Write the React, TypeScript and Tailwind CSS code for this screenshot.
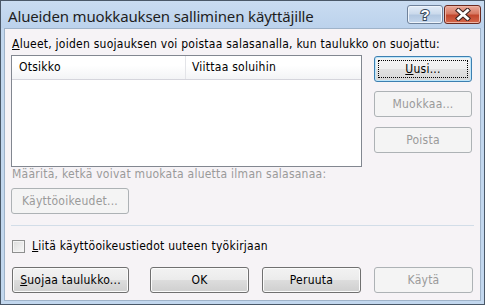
import React from "react";

const ui = "font-['DejaVu_Sans_Condensed','Liberation_Sans',sans-serif] text-[12px] leading-[13px] tracking-[0.25px]";

const btnBase =
  "flex items-center justify-center h-[26px] rounded-[3px] border " + ui;
const btnNormal =
  btnBase +
  " border-[#707070] text-black bg-[linear-gradient(#f2f2f2_0%,#ebebeb_50%,#dddddd_50%,#cfcfcf_100%)] shadow-[inset_0_0_0_1px_#fbfbfb]";
const btnDefault =
  btnBase +
  " border-[#3c7fb1] text-black bg-[linear-gradient(#f4f4f4_0%,#eeeeee_50%,#e2e2e2_50%,#d6d6d6_100%)] shadow-[inset_0_0_0_1px_#bfe6fa]";
const btnDisabled =
  btnBase + " border-[#adb2b5] text-[#9a9a9a] bg-[#f4f4f4]";

const HelpButton = () => (
  <div className="w-[36px] h-[19px] rounded-[3px] border border-[#6f829b] bg-[linear-gradient(#e3ecf7_0%,#cbdaec_45%,#b3c8e1_55%,#c3d6ec_100%)] shadow-[inset_0_0_0_1px_#eef4fb] flex items-center justify-center">
    <svg width="14" height="15" viewBox="0 0 14 15">
      <text
        x="7"
        y="13"
        textAnchor="middle"
        fontFamily="Liberation Sans, sans-serif"
        fontWeight="bold"
        fontSize="15"
        fill="#ffffff"
        stroke="#3a4a5e"
        strokeWidth="2"
        style={{ paintOrder: "stroke" }}
      >
        ?
      </text>
    </svg>
  </div>
);

const CloseButton = () => (
  <div className="w-[37px] h-[19px] rounded-[3px] border border-[#6b2a20] bg-[linear-gradient(#e9a99a_0%,#d77a63_45%,#c2472d_55%,#d4674b_100%)] shadow-[inset_0_0_0_1px_#eeb3a3] flex items-center justify-center">
    <svg width="16" height="13" viewBox="0 0 16 13">
      <path d="M3.5 2.5 L12.5 10.5 M12.5 2.5 L3.5 10.5" stroke="#3b2320" strokeWidth="5" strokeLinecap="square" />
      <path d="M3.5 2.5 L12.5 10.5 M12.5 2.5 L3.5 10.5" stroke="#ffffff" strokeWidth="3" strokeLinecap="square" />
    </svg>
  </div>
);

export default function App() {
  return (
    <div className="w-[485px] h-[305px] border border-[#4a5868] bg-[#c2d7ee] flex flex-col">
      {/* title bar */}
      <div className="h-[27px] flex items-start bg-[linear-gradient(#c9dcf1,#bcd2ec)]">
        <div className="flex-1 pl-[7px] pt-[5px] font-['Noto_Sans',sans-serif] text-[15px] leading-[20px] text-[#1e1e1e] tracking-[-0.15px]">
          Alueiden muokkauksen salliminen käyttäjille
        </div>
        <div className="flex gap-[1px] pt-[4px] pr-[3px]">
          <HelpButton />
          <CloseButton />
        </div>
      </div>

      <div className="flex-1 flex px-[3px] pb-[3px]">
        {/* client area */}
        <div className={"flex-1 border border-[#9fb3c9] bg-[#f6f3f6] flex flex-col text-black " + ui}>
          <div className="mt-[9px] ml-[7px] h-[13px]">
            <span className="underline">A</span>lueet, joiden suojauksen voi poistaa salasanalla, kun taulukko on suojattu:
          </div>

          <div className="mt-[4px] flex items-start">
            {/* list box */}
            <div className="ml-[6px] w-[351px] h-[112px] border border-[#828790] bg-white">
              <div className="h-[24px] flex border-b border-[#d5d5dc] bg-[linear-gradient(#ffffff_0%,#ffffff_40%,#f3f4f6_100%)]">
                <div className="w-[174px] border-r border-[#e3e4e8] pl-[7px] flex items-center">Otsikko</div>
                <div className="pl-[6px] flex items-center">Viittaa soluihin</div>
              </div>
            </div>

            {/* side buttons */}
            <div className="ml-[12px] mt-[1px] w-[98px] flex flex-col">
              <button className={btnDefault + " w-[98px] relative"}>
                <span className="absolute inset-[3px] border border-dotted border-black" />
                <span>
                  <span className="underline">U</span>usi...
                </span>
              </button>
              <button className={btnDisabled + " w-[98px] mt-[9px]"}>Muokkaa...</button>
              <button className={btnDisabled + " w-[98px] mt-[10px]"}>Poista</button>
            </div>
          </div>

          <div className="mt-[1px] ml-[7px] h-[13px] text-[#9a9a9a]">
            Määritä, ketkä voivat muokata aluetta ilman salasanaa:
          </div>

          <button className={btnDisabled + " ml-[6px] mt-[7px] w-[118px]"}>Käyttöoikeudet...</button>

          <div className="mt-[11px] ml-[6px] mr-[6px] h-px bg-[#d2dde8]" />

          <div className="mt-[14px] ml-[7px] flex items-center">
            <div className="w-[13px] h-[13px] border border-[#8e8f8f] bg-[linear-gradient(135deg,#dcdcdc,#f8f8f8)] shadow-[inset_0_0_0_1px_#f4f4f4]" />
            <span className="ml-[7px]">
              <span className="underline">L</span>iitä käyttöoikeustiedot uuteen työkirjaan
            </span>
          </div>

          <div className="mt-[14px] ml-[7px] flex">
            <button className={btnNormal + " w-[117px]"}>
              <span>
                <span className="underline">S</span>uojaa taulukko...
              </span>
            </button>
            <button className={btnNormal + " w-[99px] ml-[21px]"}>OK</button>
            <button className={btnNormal + " w-[99px] ml-[13px]"}>Peruuta</button>
            <button className={btnDisabled + " w-[99px] ml-[13px]"}>Käytä</button>
          </div>
        </div>
      </div>
    </div>
  );
}
